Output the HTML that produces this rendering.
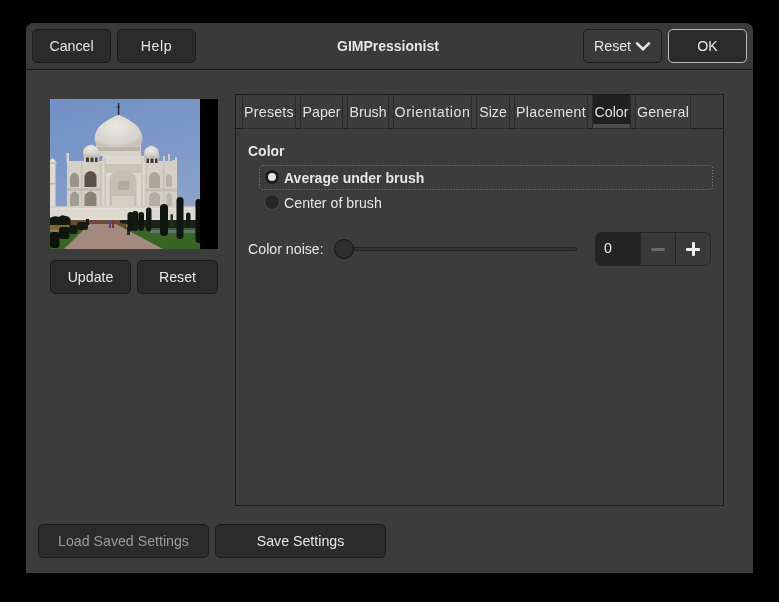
<!DOCTYPE html>
<html><head><meta charset="utf-8">
<style>
*{box-sizing:border-box;margin:0;padding:0}
html,body{width:779px;height:602px;background:#000;overflow:hidden;font-family:"Liberation Sans",sans-serif;color:#e6e6e6}
.a{position:absolute}
body{will-change:transform}
#dlg{left:26px;top:23px;width:727px;height:550px;background:#3c3c3c;border-radius:8px 8px 0 0}
#hdr{left:26px;top:23px;width:727px;height:46px;background:#3a3a3a;border-radius:8px 8px 0 0}
#sep{left:26px;top:69px;width:727px;height:1px;background:#191919}
.btn{position:absolute;height:34px;background:#2b2b2b;border:1px solid #1c1c1c;border-radius:5px;font-size:14.2px;color:#e6e6e6;text-align:center;line-height:32px;white-space:nowrap}
.txt{position:absolute;white-space:nowrap;font-size:14.2px;line-height:17px}
.tab{position:absolute;top:95px;height:33px;border-left:1px solid #2a2a2a;border-right:1px solid #2a2a2a;font-size:14.2px;line-height:34px;text-align:center;white-space:nowrap;color:#e0e0e0}
</style></head><body>
<div class="a" id="dlg"></div>
<div class="a" id="hdr"></div>
<div class="a" id="sep"></div>

<div class="btn" style="left:32px;top:29px;width:79px">Cancel</div>
<div class="btn" style="left:117px;top:29px;width:79px;letter-spacing:0.6px">Help</div>
<div class="txt" style="left:337px;top:38px;font-weight:bold;font-size:14px">GIMPressionist</div>
<div class="btn" style="left:583px;top:29px;width:79px;background:#3a3a3a;text-align:left;padding-left:10px">Reset</div>
<svg class="a" style="left:634px;top:39px" width="18" height="14" viewBox="0 0 18 14"><path d="M2.3 3.6 L9 10.2 L15.7 3.6" fill="none" stroke="#e6e6e6" stroke-width="2.6"/></svg>
<div class="btn" style="left:668px;top:29px;width:79px;border-color:#bdbdbd">OK</div>

<!-- preview -->
<div class="a" style="left:50px;top:99px;width:168px;height:150px;background:#000"></div>
<svg class="a" style="left:50px;top:99px" width="150" height="150" viewBox="0 0 150 150">
<defs>
<linearGradient id="sky" x1="0" y1="0" x2="0.3" y2="1">
<stop offset="0" stop-color="#7190c4"/><stop offset="0.5" stop-color="#7c99c9"/><stop offset="1" stop-color="#90a5c6"/>
</linearGradient>
<radialGradient id="dome" cx="0.45" cy="0.4" r="0.65">
<stop offset="0" stop-color="#ebe8e2"/><stop offset="0.8" stop-color="#d6d2ca"/><stop offset="1" stop-color="#c4c0b6"/>
</radialGradient>
<radialGradient id="sd" cx="0.45" cy="0.4" r="0.7">
<stop offset="0" stop-color="#ece9e3"/><stop offset="1" stop-color="#cdc9c0"/>
</radialGradient>
</defs>
<rect width="150" height="150" fill="url(#sky)"/>
<!-- left minaret -->
<rect x="0" y="63" width="5.5" height="45" fill="#dedad2"/>
<path d="M-1 63 Q2.5 56 6 63 Z" fill="#e4e1da"/>
<rect x="0" y="63" width="6.5" height="2" fill="#c9c5bc"/>
<rect x="0" y="84" width="6" height="1.5" fill="#bdb9b0"/>
<!-- main building base -->
<rect x="17" y="64" width="110" height="44" fill="#d4d0c6"/>
<rect x="17" y="62" width="110" height="3" fill="#d4d0c6"/>
<!-- turrets -->
<rect x="16.5" y="54" width="2.5" height="10" fill="#d8d4cc"/>
<rect x="113" y="57" width="2" height="8" fill="#d0ccc3"/>
<rect x="118" y="55" width="2" height="10" fill="#d0ccc3"/>
<rect x="122" y="61" width="3" height="4" fill="#d0ccc3"/>
<rect x="125" y="58" width="2" height="7" fill="#d0ccc3"/>
<!-- pishtaq -->
<rect x="52.5" y="57" width="42" height="51" fill="#dcd8cf"/>
<rect x="55" y="65" width="37" height="9" fill="#c9c4b8"/>
<!-- drum -->
<rect x="46" y="44" width="45" height="13" fill="#d6d2c9"/>
<rect x="47" y="48" width="43" height="4" fill="#b8b3a8"/>
<!-- main dome -->
<path d="M47.5 47.5 C43 43 43 33 52 25 Q60 19 68.5 15.5 Q77 19 85 25 C94 33 94 43 89.5 47.5 Z" fill="url(#dome)"/>
<rect x="67.8" y="4" width="1.5" height="12" fill="#2f2f2f"/>
<circle cx="68.5" cy="8" r="1.2" fill="#2f2f2f"/>
<!-- chhatris -->
<path d="M33.5 56 C32 50 35 47 41 45.5 C47 47 50 50 49 56 Z" fill="url(#sd)"/>
<rect x="33" y="56" width="17" height="2" fill="#c3bfb5"/>
<rect x="34" y="58" width="15" height="5.5" fill="#cfcbc2"/>
<rect x="36" y="58.5" width="3" height="4.5" fill="#3e3830"/>
<rect x="40.5" y="58.5" width="3" height="4.5" fill="#3e3830"/>
<rect x="45" y="58.5" width="2.5" height="4.5" fill="#3e3830"/>
<path d="M94.5 57 C93 51 96 48 101.5 46.5 C107 48 110 51 108.5 57 Z" fill="url(#sd)"/>
<rect x="94" y="57" width="15.5" height="2" fill="#c3bfb5"/>
<rect x="95" y="59" width="13.5" height="5.5" fill="#cfcbc2"/>
<rect x="96.5" y="59.5" width="2.5" height="4.5" fill="#3e3830"/>
<rect x="100.5" y="59.5" width="3" height="4.5" fill="#3e3830"/>
<rect x="105" y="59.5" width="2.5" height="4.5" fill="#3e3830"/>
<!-- central arch -->
<path d="M59.5 107 L59.5 80 Q61 72 73 70.5 Q85 72 86.5 80 L86.5 107 Z" fill="#c4bfb3"/>
<rect x="68" y="82" width="11" height="9" fill="#b0ab9f"/>
<path d="M62 107 L62 97 L84 97 L84 107 Z" fill="#d4cfc4"/>
<!-- side arches -->
<path d="M34.5 88 L34.5 77 Q36 72.5 40.5 72 Q45 72.5 46.5 77 L46.5 88 Z" fill="#5a5248"/>
<path d="M34.5 107 L34.5 97 Q36 93 40.5 92.5 Q45 93 46.5 97 L46.5 107 Z" fill="#8a8378"/>
<path d="M20 88 L20 79 Q21 74 24.5 73.5 Q28 74 29 79 L29 88 Z" fill="#9a958a"/>
<path d="M20 107 L20 97 Q21 93 24.5 92.5 Q28 93 29 97 L29 107 Z" fill="#a39e93"/>
<path d="M99 89 L99 78 Q100.5 73.5 104.5 73 Q108.5 73.5 110 78 L110 89 Z" fill="#aaa599"/>
<path d="M99 107 L99 97 Q100.5 93.5 104.5 93 Q108.5 93.5 110 97 L110 107 Z" fill="#b4afa4"/>
<path d="M116 88 L116 79 Q117 75 119 75 Q121 75 122 79 L122 88 Z" fill="#b8b3a8"/>
<path d="M116 107 L116 98 Q117 94 119 94 Q121 94 122 98 L122 107 Z" fill="#bcb7ac"/>
<rect x="31" y="64" width="1.5" height="44" fill="#c6c1b6"/>
<rect x="50" y="64" width="1.5" height="44" fill="#c6c1b6"/>
<rect x="95.5" y="64" width="1.5" height="44" fill="#c6c1b6"/>
<rect x="113" y="64" width="1.5" height="44" fill="#c6c1b6"/>
<rect x="17" y="89" width="35" height="3" fill="#c2bdb2"/>
<rect x="95" y="89.5" width="32" height="3" fill="#c2bdb2"/>
<rect x="54.5" y="59" width="1.5" height="48" fill="#c8c3b8"/>
<rect x="91" y="59" width="1.5" height="48" fill="#c8c3b8"/>
<!-- platform -->
<rect x="0" y="107.5" width="150" height="13.5" fill="#e2ded6"/>
<rect x="0" y="107.5" width="150" height="1" fill="#c8c4ba"/>
<rect x="0" y="110" width="150" height="9" fill="#d6d2c9" opacity="0.5"/>
<!-- sandstone/hedge zone -->
<rect x="0" y="121" width="150" height="6" fill="#6e4a36"/>
<!-- grass -->
<rect x="0" y="126" width="150" height="24" fill="#386424"/>
<path d="M0 127 L38 127 L30 131 L0 131 Z" fill="#7a6a34"/>
<!-- path -->
<path d="M14 150 L39.5 125 L66 125 L113 150 Z" fill="#a48a7e"/>
<!-- right grass lighter stripes -->
<path d="M100 131 L145 131 L145 134 L100 134 Z" fill="#6a7a80" opacity="0.8"/>
<!-- left bushes -->
<path d="M0 119 Q4 116 9 118 Q12 115 15 117 Q19 117 20.5 120 L20.5 127 L0 127 Z" fill="#10180c"/>
<rect x="0" y="126" width="21" height="4" fill="#7e6a2e"/>
<rect x="0" y="130.5" width="10" height="2.5" fill="#8a7868"/>
<rect x="9" y="128" width="10.5" height="12" rx="3" fill="#0f170c"/>
<rect x="19" y="126" width="8.5" height="9" rx="2.5" fill="#111a0d"/>
<rect x="27" y="123" width="11" height="8" rx="2.5" fill="#131c0f"/>
<rect x="0" y="133" width="9.5" height="16" rx="3" fill="#0c140a"/>
<rect x="36" y="120" width="3" height="6" fill="#1a1a14"/>
<!-- people -->
<rect x="59" y="121" width="2" height="8" fill="#4a4a8a"/>
<rect x="62" y="121" width="2" height="8" fill="#8a3030"/>
<rect x="76" y="122" width="5" height="6" fill="#a8784a"/>
<rect x="77" y="128" width="3" height="8" fill="#2a2a30"/>
<path d="M70 121 L150 121 L150 129 L100 129 L70 124 Z" fill="#1c2418"/>
<!-- cypress -->
<rect x="77.5" y="113" width="6" height="19" rx="3" fill="#0f150f"/>
<rect x="82" y="112" width="6.5" height="20" rx="3.2" fill="#111811"/>
<rect x="88.5" y="113" width="5.5" height="19" rx="2.7" fill="#0e140e"/>
<rect x="96" y="108.5" width="5.5" height="24" rx="2.7" fill="#121912"/>
<rect x="110" y="105" width="8" height="32" rx="4" fill="#0d130d"/>
<rect x="120.5" y="115" width="2.5" height="12" rx="1.2" fill="#263020"/>
<rect x="126.5" y="98" width="7" height="42" rx="3.5" fill="#101610"/>
<rect x="136" y="113.5" width="4.5" height="15.5" rx="2.2" fill="#131913"/>
<rect x="145.5" y="100" width="6" height="44" rx="3" fill="#0b0f0b"/>
</svg>
<div class="btn" style="left:50px;top:260px;width:81px">Update</div>
<div class="btn" style="left:137px;top:260px;width:81px">Reset</div>

<!-- notebook -->
<div class="a" style="left:235px;top:94px;width:489px;height:412px;border:1px solid #1c1c1c"></div>
<div class="a" style="left:236px;top:128px;width:487px;height:1px;background:#2a2a2a"></div>
<div class="a" style="left:236px;top:128px;width:6px;height:1px;background:#1c1c1c"></div><div class="a" style="left:296px;top:128px;width:4px;height:1px;background:#1c1c1c"></div><div class="a" style="left:343px;top:128px;width:4px;height:1px;background:#1c1c1c"></div><div class="a" style="left:389px;top:128px;width:4px;height:1px;background:#1c1c1c"></div><div class="a" style="left:472px;top:128px;width:4px;height:1px;background:#1c1c1c"></div><div class="a" style="left:510px;top:128px;width:4px;height:1px;background:#1c1c1c"></div><div class="a" style="left:588px;top:128px;width:4px;height:1px;background:#1c1c1c"></div><div class="a" style="left:631px;top:128px;width:4px;height:1px;background:#1c1c1c"></div><div class="a" style="left:691px;top:128px;width:32px;height:1px;background:#1c1c1c"></div>
<div class="tab" style="left:242px;width:54px;letter-spacing:0.25px">Presets</div>
<div class="tab" style="left:300px;width:43px">Paper</div>
<div class="tab" style="left:347px;width:42px">Brush</div>
<div class="tab" style="left:393px;width:79px;letter-spacing:0.6px">Orientation</div>
<div class="tab" style="left:476px;width:34px">Size</div>
<div class="tab" style="left:514px;width:74px;letter-spacing:0.35px">Placement</div>
<div class="tab" style="left:592px;width:39px;background:#202020;border-color:#2a2a2a">Color</div>
<div class="a" style="left:593px;top:124px;width:37px;height:4px;background:#4d4d4d"></div>
<div class="tab" style="left:635px;width:56px;letter-spacing:0.25px">General</div>

<div class="txt" style="left:248px;top:143px;font-weight:bold;font-size:14px">Color</div>
<svg class="a" style="left:258px;top:164px" width="456" height="27" viewBox="0 0 456 27"><rect x="1.5" y="1.5" width="453" height="24" rx="3" fill="none" stroke="#8a8a8a" stroke-width="1" stroke-dasharray="1 2"/></svg>
<div class="a" style="left:264px;top:169px;width:16px;height:16px;border-radius:50%;background:#1c1c1c;border:1px solid #444"></div>
<div class="a" style="left:268px;top:173px;width:8px;height:8px;border-radius:50%;background:#e2e2e2"></div>
<div class="txt" style="left:284px;top:170px;font-weight:bold;font-size:14px">Average under brush</div>
<div class="a" style="left:264px;top:194px;width:16px;height:16px;border-radius:50%;background:#262626;border:1px solid #4a4a4a"></div>
<div class="txt" style="left:284px;top:195px">Center of brush</div>

<div class="txt" style="left:248px;top:241px">Color noise:</div>
<div class="a" style="left:352px;top:247px;width:225px;height:4px;border-radius:2px;background:#333;border:1px solid #262626"></div>
<div class="a" style="left:334px;top:239px;width:20px;height:20px;border-radius:50%;background:#2e2e2e;border:1px solid #121212"></div>

<div class="a" style="left:595px;top:232px;width:116px;height:34px;border:1px solid #262626;border-radius:6px;background:#3a3a3a;overflow:hidden">
  <div class="a" style="left:0;top:0;width:44px;height:32px;background:#232323"></div>
  <div class="a" style="left:44px;top:0;width:1px;height:32px;background:#262626"></div>
  <div class="a" style="left:79px;top:0;width:1px;height:32px;background:#262626"></div>
</div>
<div class="txt" style="left:604px;top:240px">0</div>
<div class="a" style="left:651px;top:247.5px;width:14px;height:3px;border-radius:1.5px;background:#6a6a6a"></div>
<div class="a" style="left:686px;top:247.5px;width:14px;height:3px;border-radius:1px;background:#eeeeee"></div>
<div class="a" style="left:691.5px;top:242px;width:3px;height:14px;border-radius:1px;background:#eeeeee"></div>

<!-- bottom buttons -->
<div class="btn" style="left:38px;top:524px;width:171px;color:#9c9c9c">Load Saved Settings</div>
<div class="btn" style="left:215px;top:524px;width:171px">Save Settings</div>
</body></html>
